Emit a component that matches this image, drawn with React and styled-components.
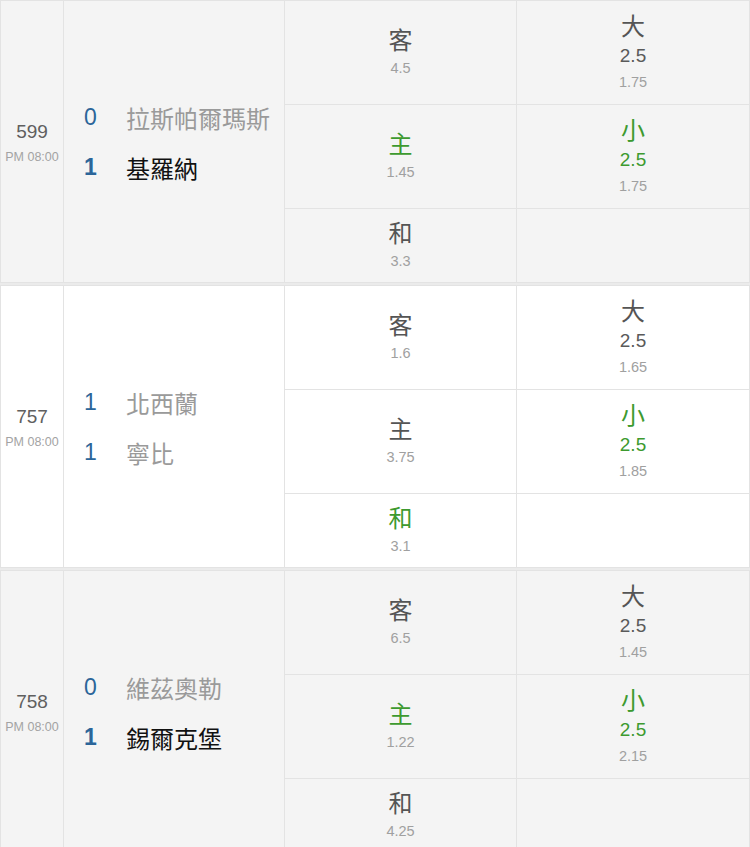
import React from "react"
import styled, { createGlobalStyle } from "styled-components"

const GlobalStyle = createGlobalStyle`
  html, body {
    margin: 0;
    padding: 0;
    background: #ebebeb;
    font-family: "Liberation Sans", "Noto Sans CJK TC", sans-serif;
  }
`

const List = styled.div`
  width: 750px;
  display: flex;
  flex-direction: column;
  gap: 2px;
`

const Match = styled.div`
  display: grid;
  grid-template-columns: 62px 220px 1fr;
  column-gap: 1px;
  background: #e3e3e3;
  border: 1px solid #e3e3e3;
  height: 281px;
`

const Cell = styled.div`
  background: ${(p) => (p.$white ? "#fff" : "#f4f4f4")};
`

const Info = styled(Cell)`
  display: flex;
  flex-direction: column;
  align-items: center;
  justify-content: center;
  padding-top: 4px;
`

const MatchNo = styled.div`
  font-size: 19px;
  line-height: 26px;
  color: #5f5f5f;
`

const Time = styled.div`
  font-size: 12.5px;
  line-height: 24px;
  color: #a3a3a3;
`

const Teams = styled(Cell)`
  display: flex;
  flex-direction: column;
  justify-content: center;
  padding-left: 20px;
  padding-top: 2px;
`

const TeamRow = styled.div`
  display: flex;
  align-items: center;
  height: 50px;
`

const Score = styled.span`
  width: 42px;
  font-size: 23px;
  color: #2b6599;
  font-weight: ${(p) => (p.$win ? 700 : 400)};
`

const TeamName = styled.span`
  font-size: 24px;
  color: ${(p) => (p.$win ? "#111" : "#9a9a9a")};
`

const Odds = styled.div`
  display: grid;
  grid-template-columns: 231px 1fr;
  grid-template-rows: 103px 103px 1fr;
  gap: 1px;
`

const OddsCell = styled(Cell)`
  display: flex;
  flex-direction: column;
  align-items: center;
  justify-content: center;
`

const Label = styled.div`
  font-size: 24px;
  line-height: 30px;
  color: ${(p) => (p.$hot ? "#3d9a2f" : "#555")};
`

const Line = styled.div`
  font-size: 19px;
  line-height: 28px;
  color: ${(p) => (p.$hot ? "#3d9a2f" : "#5a5a5a")};
`

const Price = styled.div`
  font-size: 14.5px;
  line-height: 24px;
  color: #a0a0a0;
`

const matches = [
  {
    no: "599",
    white: false,
    teams: [
      { score: 0, name: "拉斯帕爾瑪斯", win: false },
      { score: 1, name: "基羅納", win: true },
    ],
    away: "4.5", home: "1.45", draw: "3.3", hot: "home",
    over: "1.75", under: "1.75", ouHot: "under",
  },
  {
    no: "757",
    white: true,
    teams: [
      { score: 1, name: "北西蘭", win: false },
      { score: 1, name: "寧比", win: false },
    ],
    away: "1.6", home: "3.75", draw: "3.1", hot: "draw",
    over: "1.65", under: "1.85", ouHot: "under",
  },
  {
    no: "758",
    white: false,
    teams: [
      { score: 0, name: "維茲奧勒", win: false },
      { score: 1, name: "錫爾克堡", win: true },
    ],
    away: "6.5", home: "1.22", draw: "4.25", hot: "home",
    over: "1.45", under: "2.15", ouHot: "under",
  },
]

const Side = ({ white, label, price, hot }) => (
  <OddsCell $white={white}>
    <Label $hot={hot}>{label}</Label>
    <Price>{price}</Price>
  </OddsCell>
)

const Total = ({ white, label, price, hot }) => (
  <OddsCell $white={white}>
    <Label $hot={hot}>{label}</Label>
    <Line $hot={hot}>2.5</Line>
    <Price>{price}</Price>
  </OddsCell>
)

export default function App() {
  return (
    <>
      <GlobalStyle />
      <List>
        {matches.map((m) => (
          <Match key={m.no}>
            <Info $white={m.white}>
              <MatchNo>{m.no}</MatchNo>
              <Time>PM 08:00</Time>
            </Info>
            <Teams $white={m.white}>
              {m.teams.map((t) => (
                <TeamRow key={t.name}>
                  <Score $win={t.win}>{t.score}</Score>
                  <TeamName $win={t.win}>{t.name}</TeamName>
                </TeamRow>
              ))}
            </Teams>
            <Odds>
              <Side white={m.white} label="客" price={m.away} hot={m.hot === "away"} />
              <Total white={m.white} label="大" price={m.over} hot={m.ouHot === "over"} />
              <Side white={m.white} label="主" price={m.home} hot={m.hot === "home"} />
              <Total white={m.white} label="小" price={m.under} hot={m.ouHot === "under"} />
              <Side white={m.white} label="和" price={m.draw} hot={m.hot === "draw"} />
              <OddsCell $white={m.white} />
            </Odds>
          </Match>
        ))}
      </List>
    </>
  )
}
